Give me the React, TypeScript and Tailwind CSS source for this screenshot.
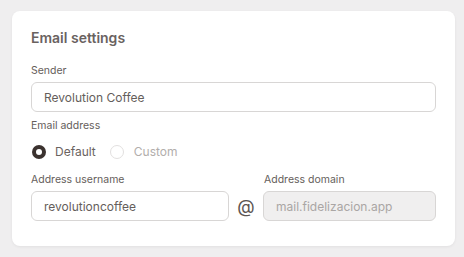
export default function App() {
  return (
    <div className="min-h-screen w-full bg-[#efeeef] pt-[11px] pl-[12px] font-['Inter',sans-serif]">
      <div className="w-[443px] h-[235px] rounded-lg bg-white shadow-[0_1px_3px_rgba(0,0,0,0.06)] px-[19px] pt-[17px]">
        <h2 className="text-[14px] leading-5 font-semibold text-[#6a625f]">Email settings</h2>

        {/* Sender */}
        <label className="block mt-[15px] text-[10.5px] leading-4 text-[#655e5b]">Sender</label>
        <input
          type="text"
          defaultValue="Revolution Coffee"
          className="mt-[3px] w-full h-[30px] rounded-md border border-[#d8d6d5] px-3 text-[12px] text-[#655e5b] outline-none bg-white"
        />

        {/* Email address */}
        <label className="block mt-[6px] text-[10.5px] leading-4 text-[#655e5b]">Email address</label>
        <div className="mt-[8px] flex items-center h-5">
          <span className="w-[14px] h-[14px] rounded-full bg-[#3b322f] flex items-center justify-center ml-px">
            <span className="w-[6px] h-[6px] rounded-full bg-white" />
          </span>
          <span className="ml-[9px] text-[12px] text-[#6a6360]">Default</span>
          <span className="ml-[14px] w-[14px] h-[14px] rounded-full border border-[#e2e0df]" />
          <span className="ml-[10px] text-[12px] text-[#b2aeac]">Custom</span>
        </div>

        {/* Address */}
        <div className="mt-[10px] flex items-end">
          <div className="w-[198px]">
            <label className="block text-[10.5px] leading-4 text-[#655e5b]">Address username</label>
            <input
              type="text"
              defaultValue="revolutioncoffee"
              className="mt-[3px] w-full h-[30px] rounded-md border border-[#d8d6d5] px-3 text-[12px] text-[#655e5b] outline-none bg-white"
            />
          </div>
          <span className="w-[34px] h-[30px] flex items-center justify-center text-[18px] text-[#5c5552]">@</span>
          <div className="flex-1">
            <label className="block text-[10.5px] leading-4 text-[#655e5b] pl-px">Address domain</label>
            <input
              type="text"
              disabled
              defaultValue="mail.fidelizacion.app"
              className="mt-[3px] w-full h-[30px] rounded-md border border-[#d8d6d5] px-3 text-[12px] text-[#aaa6a4] outline-none bg-[#f0efef]"
            />
          </div>
        </div>
      </div>
    </div>
  );
}
